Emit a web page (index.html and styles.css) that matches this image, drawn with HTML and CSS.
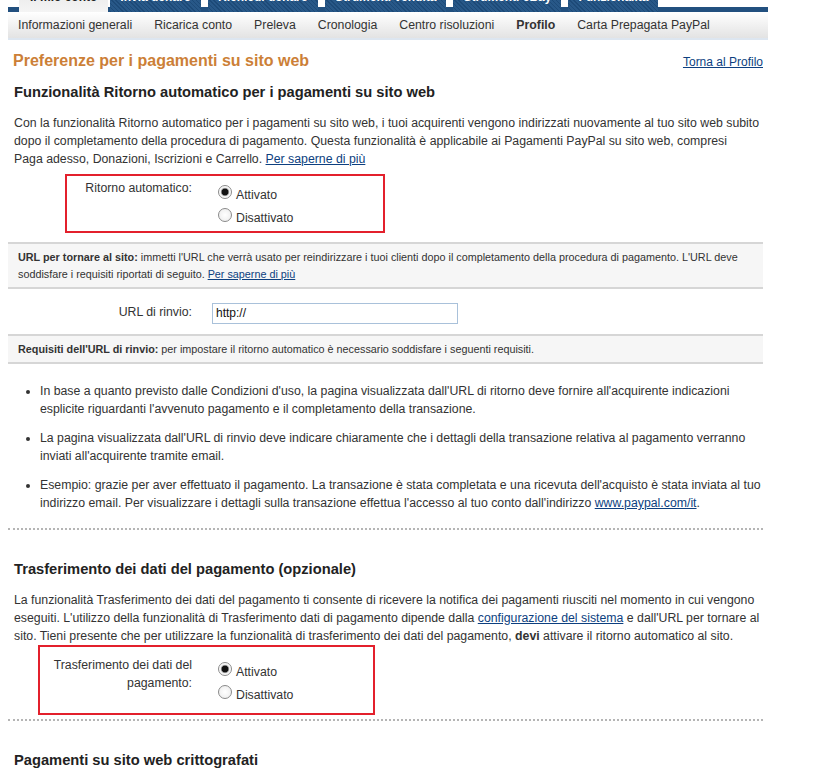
FILE: index.html
```html
<!DOCTYPE html>
<html lang="it">
<head>
    <meta charset="UTF-8">
    <title>Preferenze per i pagamenti su sito web</title>
    <link rel="stylesheet" href="styles.css">
</head>
<body>
    <div class="page">
        <!-- Main tabs -->
        <div class="topbar">
            <span class="tab tabActive">Il mio conto</span>
            <span class="tab">Invia denaro</span>
            <span class="tab">Richiedi denaro</span>
            <span class="tab">Strumenti vendita</span>
            <span class="tab">Strumenti eBay</span>
            <span class="tab">Funzionalità</span>
        </div>

        <div class="subnav">
            <a href="#">Informazioni generali</a>
            <a href="#">Ricarica conto</a>
            <a href="#">Preleva</a>
            <a href="#">Cronologia</a>
            <a href="#">Centro risoluzioni</a>
            <a href="#" class="current">Profilo</a>
            <a href="#">Carta Prepagata PayPal</a>
        </div>

        <div class="content">
            <div class="pageHead">
                <h1>Preferenze per i pagamenti su sito web</h1>
                <a href="#" class="link">Torna al Profilo</a>
            </div>

            <h2>Funzionalità Ritorno automatico per i pagamenti su sito web</h2>
            <p class="intro">Con la funzionalità Ritorno automatico per i pagamenti su sito web, i tuoi acquirenti vengono indirizzati nuovamente al tuo sito web subito dopo il completamento della procedura di pagamento. Questa funzionalità è applicabile ai Pagamenti PayPal su sito web, compresi <span class="nowrap">Paga adesso,</span> Donazioni, Iscrizioni e Carrello. <a href="#" class="link">Per saperne di più</a></p>

            <div class="formRow highlight highlightOne">
                <div class="fieldLabel">Ritorno automatico:</div>
                <div class="radios">
                    <label class="radio"><input type="radio" name="autoReturn" checked> Attivato</label>
                    <label class="radio"><input type="radio" name="autoReturn"> Disattivato</label>
                </div>
            </div>

            <div class="note">
                <b>URL per tornare al sito:</b> immetti l'URL che verrà usato per reindirizzare i tuoi clienti dopo il completamento della procedura di pagamento. L'URL deve soddisfare i requisiti riportati di seguito. <a href="#" class="link">Per saperne di più</a>
            </div>

            <div class="urlRow">
                <div class="fieldLabel">URL di rinvio:</div>
                <input type="text" class="urlInput" value="http://">
            </div>

            <div class="note">
                <b>Requisiti dell'URL di rinvio:</b> per impostare il ritorno automatico è necessario soddisfare i seguenti requisiti.
            </div>

            <ul class="rules">
                <li>In base a quanto previsto dalle Condizioni d'uso, la pagina visualizzata dall'URL di ritorno deve fornire all'acquirente indicazioni esplicite riguardanti l'avvenuto pagamento e il completamento della transazione.</li>
                <li>La pagina visualizzata dall'URL di rinvio deve indicare chiaramente che i dettagli della transazione relativa al pagamento verranno inviati all'acquirente tramite email.</li>
                <li>Esempio: grazie per aver effettuato il pagamento. La transazione è stata completata e una ricevuta dell'acquisto è stata inviata al tuo indirizzo email. Per visualizzare i dettagli sulla transazione effettua l'accesso al tuo conto dall'indirizzo <a href="#" class="link">www.paypal.com/it</a>.</li>
            </ul>

            <hr class="dotted">

            <h2 class="spaced">Trasferimento dei dati del pagamento (opzionale)</h2>
            <p>La funzionalità Trasferimento dei dati del pagamento ti consente di ricevere la notifica dei pagamenti riusciti nel momento in cui vengono eseguiti. L'utilizzo della funzionalità di Trasferimento dati di pagamento dipende dalla <a href="#" class="link">configurazione del sistema</a> e dall'URL per tornare al sito. Tieni presente che per utilizzare la funzionalità di trasferimento dei dati del pagamento, <b>devi</b> attivare il ritorno automatico al sito.</p>

            <div class="formRow highlight highlightTwo">
                <div class="fieldLabel">Trasferimento dei dati del pagamento:</div>
                <div class="radios">
                    <label class="radio"><input type="radio" name="pdt" checked> Attivato</label>
                    <label class="radio"><input type="radio" name="pdt"> Disattivato</label>
                </div>
            </div>

            <hr class="dotted dottedTight">

            <h2 class="spaced">Pagamenti su sito web crittografati</h2>
        </div>
    </div>
</body>
</html>
```

FILE: styles.css
```css
* {
    box-sizing: border-box;
}

body {
    margin: 0;
    font-family: "Liberation Sans", Arial, sans-serif;
    font-size: 12.3px;
    color: #333;
    background: #fff;
}

.page {
    width: 760px;
    margin-left: 8px;
}

.nowrap {
    white-space: nowrap;
}

/* tabs cut off at the top of the window */
.topbar {
    display: flex;
    align-items: flex-end;
    height: 12px;
    overflow: hidden;
    padding-left: 11px;
    background: linear-gradient(#fff 0 7px, #22507f 7px);
}

.tab {
    flex: none;
    height: 30px;
    padding: 8px 10px 0;
    margin-right: 7px;
    font-size: 12px;
    font-weight: bold;
    line-height: 14px;
    white-space: nowrap;
    color: #fff;
    background: repeating-linear-gradient(45deg, #1d4a78 0 1px, #285888 1px 3px);
}

.tabActive {
    padding: 8px 11px 0;
    color: #222;
    margin-right: 2px;
    background: linear-gradient(#e6e6e6, #f4f4f4);
}

.subnav {
    display: flex;
    gap: 22px;
    height: 28px;
    padding-left: 10px;
    background: linear-gradient(#fff, #e3e3e3);
    border-bottom: 2px solid #dde6f0;
}

.subnav a {
    font-size: 12.3px;
    line-height: 27px;
    color: #333;
    text-decoration: none;
}

.subnav a.current {
    font-weight: bold;
}

.content {
    width: 755px;
}

.link {
    color: #0d3f7f;
    text-decoration: underline;
}

.pageHead {
    display: flex;
    justify-content: space-between;
    align-items: baseline;
    margin-top: 11px;
    padding: 0 0 0 5px;
}

.pageHead .link {
    font-size: 12px;
}

h1 {
    margin: 0;
    font-size: 16px;
    line-height: 20px;
    color: #cc7f37;
}

h2 {
    margin: 12px 0 0;
    padding-left: 6px;
    font-size: 14.7px;
    line-height: 18px;
    color: #222;
}

h2.spaced {
    margin-top: 30px;
}

p {
    margin: 13px 0 0;
    padding-left: 6px;
    line-height: 18px;
}

/* label + control rows */
.formRow {
    display: grid;
    column-gap: 26px;
    align-items: start;
}

.fieldLabel {
    text-align: right;
    line-height: 18px;
}

.highlight {
    border: 2px solid #e3202c;
}

.highlightOne {
    width: 320px;
    margin: 6px 0 0 57px;
    padding: 3px 0 2px;
    grid-template-columns: 125px 1fr;
}

.highlightTwo {
    width: 337px;
    margin: 0 0 0 30px;
    padding: 9px 0 7px;
    grid-template-columns: 152px 1fr;
}

.radios {
    display: flex;
    flex-direction: column;
    padding-top: 4px;
}

.radio {
    display: flex;
    align-items: center;
    height: 23px;
}

.radio input {
    appearance: none;
    -webkit-appearance: none;
    width: 14px;
    height: 14px;
    margin: -5px 4px 0 0;
    border: 1px solid #8a8a8a;
    border-radius: 50%;
    background: radial-gradient(#fff, #eaeaea);
}

.radio input:checked {
    background: radial-gradient(circle, #111 0 3px, #777 3.5px, #eee 4.5px, #fff 6px);
}

.note {
    margin-top: 9px;
    padding: 5px 10px 4px;
    font-size: 10.8px;
    line-height: 17px;
    background: #f6f6f6;
    border-top: 2px solid #d6d6d6;
    border-bottom: 2px solid #d6d6d6;
}

.urlRow + .note {
    margin-top: 0;
}

.urlRow {
    display: grid;
    grid-template-columns: 184px 246px;
    column-gap: 20px;
    align-items: center;
    height: 45px;
}

.urlInput {
    height: 21px;
    padding: 0 3px;
    font-family: inherit;
    font-size: 12px;
    color: #111;
    border: 1px solid #a9c1da;
    margin-top: 3px;
}

.rules {
    margin: 18px 0 0;
    padding-left: 32px;
    line-height: 18px;
}

.rules li {
    margin-bottom: 11px;
}

.dotted {
    margin: 16px 0 0;
    border: 0;
    border-top: 2px dotted #b5b5b5;
}

.dottedTight {
    margin-top: 4px;
}
```
